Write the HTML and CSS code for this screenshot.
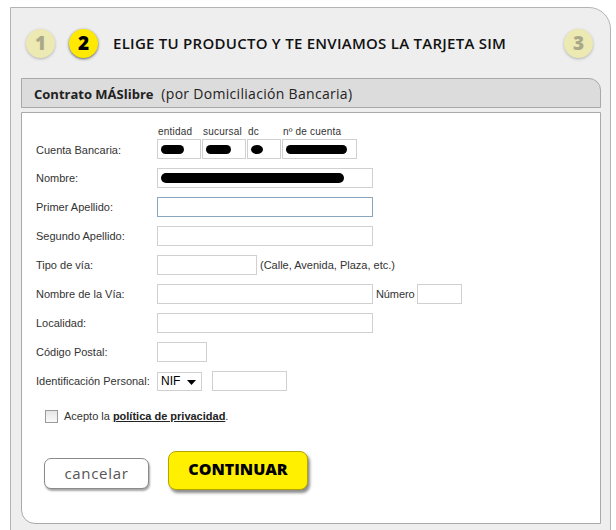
FILE: index.html
```html
<!DOCTYPE html>
<html lang="es">
<head>
<meta charset="utf-8">
<title>Contrato MÁSlibre</title>
<link rel="stylesheet" href="styles.css">
</head>
<body>
<div class="panel">
  <div class="steps">
    <span class="step step-off">1</span>
    <span class="step step-on">2</span>
    <h1 class="step-title">ELIGE TU PRODUCTO Y TE ENVIAMOS LA TARJETA SIM</h1>
    <span class="step step-off step-last">3</span>
  </div>

  <div class="section-head"><b>Contrato MÁSlibre</b>&nbsp; (por Domiciliación Bancaria)</div>

  <div class="section-body">
    <div class="form">
      <div class="row row-bank">
        <span class="label">Cuenta Bancaria:</span>
        <div class="bank">
          <div class="bank-col"><span class="mini">entidad</span><span class="field w44"><i class="blob b1"></i></span></div>
          <div class="bank-col"><span class="mini">sucursal</span><span class="field w44"><i class="blob b2"></i></span></div>
          <div class="bank-col"><span class="mini">dc</span><span class="field w34"><i class="blob b3"></i></span></div>
          <div class="bank-col"><span class="mini">nº de cuenta</span><span class="field w74"><i class="blob b4"></i></span></div>
        </div>
      </div>
      <div class="row"><span class="label">Nombre:</span><span class="field wide"><i class="blob b5"></i></span></div>
      <div class="row"><span class="label">Primer Apellido:</span><span class="field wide focus"></span></div>
      <div class="row"><span class="label">Segundo Apellido:</span><span class="field wide"></span></div>
      <div class="row"><span class="label">Tipo de vía:</span><span class="field w100"></span><span class="hint">(Calle, Avenida, Plaza, etc.)</span></div>
      <div class="row"><span class="label">Nombre de la Vía:</span><span class="field wide"></span><span class="hint num">Número</span><span class="field w45"></span></div>
      <div class="row"><span class="label">Localidad:</span><span class="field wide"></span></div>
      <div class="row"><span class="label">Código Postal:</span><span class="field w50"></span></div>
      <div class="row"><span class="label">Identificación Personal:</span>
        <span class="select">NIF <svg width="9" height="5" viewBox="0 0 9 5"><path d="M0 0h9L4.5 5z" fill="#000"/></svg></span>
        <span class="field w75"></span>
      </div>
    </div>

    <label class="accept"><span class="check"></span>Acepto la <a href="#">política de privacidad</a>.</label>

    <div class="actions">
      <button class="btn-cancel">cancelar</button>
      <button class="btn-go">CONTINUAR</button>
    </div>
  </div>
</div>
</body>
</html>
```

FILE: styles.css
```css
* { box-sizing: border-box; }
html, body { margin: 0; padding: 0; background: #fff; }

.panel {
  margin: 7px 0 0 10px;
  width: 601px;
  height: 540px;
  background: #eeeeee;
  border: 1px solid #b3b3b3;
  border-radius: 0 22px 0 0;
}

.steps {
  height: 70px;
  display: flex;
  align-items: center;
  padding: 0 17px 0 15px;
}
.step {
  width: 29px;
  height: 29px;
  border-radius: 50%;
  display: flex;
  align-items: center;
  justify-content: center;
  font-family: "Open Sans", "DejaVu Sans", sans-serif;
  font-weight: 800;
  font-size: 19px;
  margin-right: 14px;
}
.step-off {
  background: #ece9b2;
  color: #aaa88a;
  box-shadow: 0 1px 3px rgba(0,0,0,0.25);
}
.step-on {
  background: #ffe900;
  color: #000;
  box-shadow: 0 1px 3px rgba(0,0,0,0.6);
}
.step-last { margin: 0 0 0 auto; }
.step-title {
  margin: 0 0 0 1px;
  font-family: "Open Sans", "DejaVu Sans", sans-serif;
  font-weight: 600;
  font-size: 15px;
  color: #111;
  letter-spacing: 0.26px;
}

.section-head {
  margin-left: 10px;
  width: 580px;
  height: 30px;
  background: #dcdcdc;
  border: 1px solid #a9a9a9;
  border-radius: 0 12px 0 0;
  padding: 5px 0 0 12px;
  font-family: "Open Sans", "DejaVu Sans", sans-serif;
  font-size: 14px;
  letter-spacing: 0.3px;
  color: #222;
}
.section-head b { font-weight: 700; font-size: 13px; letter-spacing: 0; }

.section-body {
  margin: 4px 0 0 10px;
  width: 580px;
  height: 412px;
  background: #fff;
  border: 1px solid #a9a9a9;
  border-radius: 0 0 0 14px;
  padding: 13px 0 0 14px;
  font-family: "Liberation Sans", Arial, sans-serif;
  font-size: 11px;
  color: #333;
}

.form { display: flex; flex-direction: column; gap: 9px; }
.row { display: flex; align-items: center; height: 20px; }
.row-bank { height: auto; align-items: flex-end; }
.row-bank .label { padding-bottom: 3px; }
.label { width: 121px; flex: none; }

.bank { display: flex; gap: 1px; }
.bank-col { display: flex; flex-direction: column; }
.mini { font-size: 10px; height: 13px; padding-left: 1px; color: #333; letter-spacing: 0.2px; }

.field {
  display: flex;
  align-items: center;
  height: 20px;
  border: 1px solid #d0d0d0;
  background: #fff;
  padding-left: 3px;
}
.field.focus { border-color: #8ba7bf; }
.wide { width: 216px; }
.w44 { width: 44px; }
.w34 { width: 34px; }
.w74 { width: 75px; }
.w100 { width: 100px; }
.w45 { width: 45px; }
.w50 { width: 50px; }
.w75 { width: 75px; margin-left: 10px; }

.blob { display: block; background: #000; border-radius: 6px; height: 9px; }
.b1 { width: 23px; }
.b2 { width: 25px; }
.b3 { width: 12px; border-radius: 50%; height: 9px; }
.b4 { width: 61px; }
.b5 { width: 183px; height: 10px; }

.hint { margin-left: 3px; }
.num { margin-right: 2px; margin-left: 3px; letter-spacing: -0.1px; }

.select {
  width: 45px;
  height: 19px;
  border: 1px solid #d0d0d0;
  display: flex;
  align-items: center;
  justify-content: space-between;
  padding: 0 5px 0 3px;
  font-size: 12px;
  color: #000;
}
.select svg { margin-top: 3px; }

.accept {
  display: flex;
  align-items: center;
  margin: 18px 0 0 9px;
  height: 14px;
}
.check {
  width: 13px;
  height: 13px;
  border: 1px solid #9a9a9a;
  background: linear-gradient(#e6e6e6, #fafafa);
  margin-right: 6px;
}
.accept a { color: #222; font-weight: 700; text-decoration: underline; margin-left: 3px; }

.actions {
  display: flex;
  align-items: flex-end;
  margin: 28px 0 0 8px;
  gap: 19px;
}
.btn-cancel {
  width: 105px;
  height: 31px;
  background: #fff;
  border: 1px solid #8a8a8a;
  border-radius: 7px;
  box-shadow: 1px 2px 2px rgba(0,0,0,0.35);
  font-family: "Open Sans", "DejaVu Sans", sans-serif;
  font-size: 15px;
  letter-spacing: 0.7px;
  color: #555;
  padding: 0 0 2px;
  margin-bottom: 1px;
}
.btn-go {
  width: 140px;
  height: 39px;
  background: #fff000;
  border: 1px solid #b5a400;
  border-radius: 8px;
  box-shadow: 2px 3px 3px rgba(0,0,0,0.45);
  font-family: "Open Sans", "DejaVu Sans", sans-serif;
  font-weight: 800;
  font-size: 16px;
  color: #000;
  padding: 0 0 4px;
}
```
